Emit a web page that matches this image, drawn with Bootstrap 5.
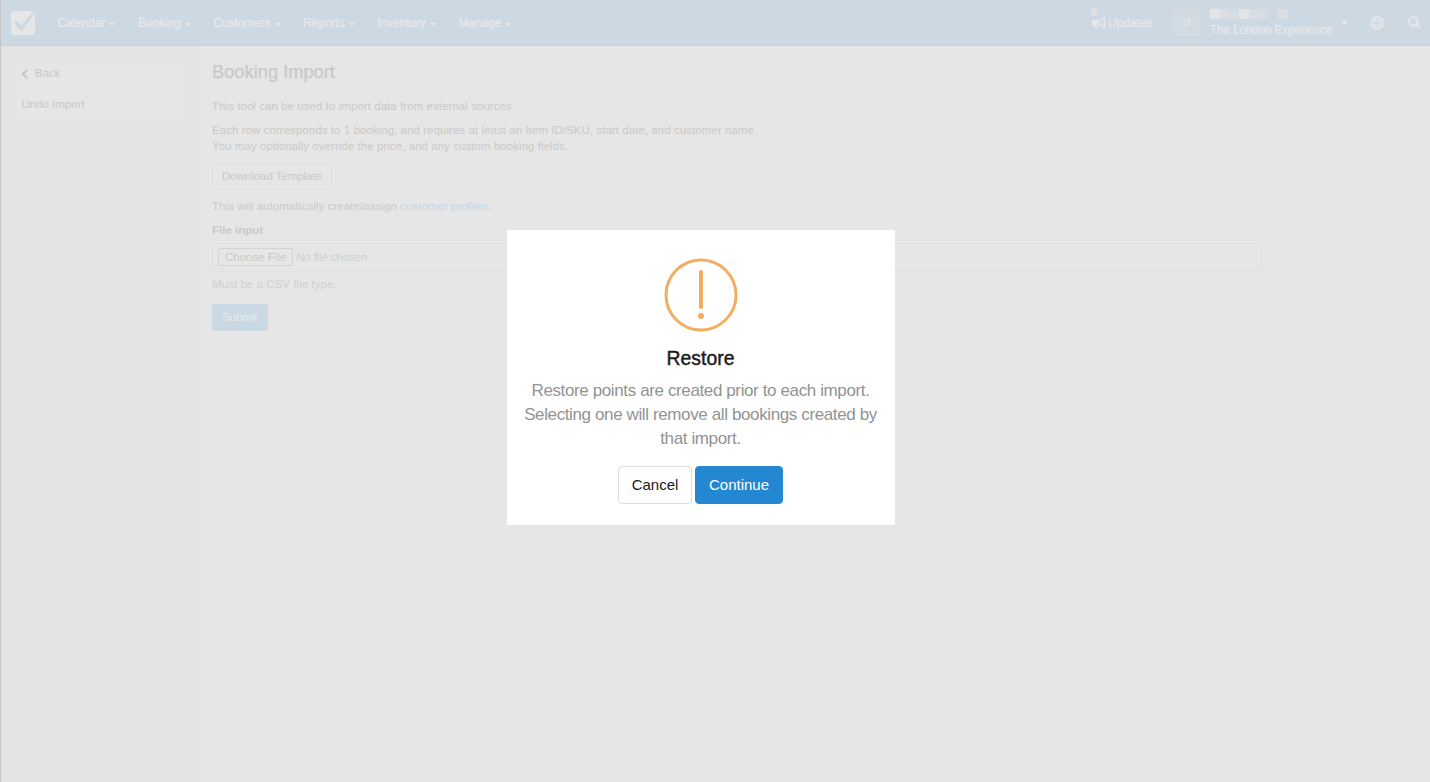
<!DOCTYPE html>
<html lang="en">
<head>
<meta charset="utf-8">
<meta name="viewport" content="width=device-width, initial-scale=1">
<title>Booking Import</title>
<link rel="stylesheet" href="https://cdn.jsdelivr.net/npm/bootstrap@5.3.0/dist/css/bootstrap.min.css">
<style>
body{font-family:"Liberation Sans",Arial,sans-serif;font-size:11.5px;line-height:16.4px;background:#e6e6e6;color:#c9c9c9;height:782px;overflow:hidden;border-left:1px solid #c4c4c6}
.topbar{height:46px;background:#ccd8e2;border-bottom:1px solid #c4d1dd;color:#e6e7e8;margin-left:-1px;border-left:1px solid #85a5c6;padding:0}
.topbar .nav-link{color:#e8e9ea;padding:0;font-size:12px;letter-spacing:-.1px;line-height:16px;white-space:nowrap;-webkit-text-stroke:.2px #e8e9ea}
.topbar .org-name{font-size:11.9px;letter-spacing:-.2px}
.topbar .dropdown-toggle::after{border-top:3px solid;border-left:3.5px solid transparent;border-right:3.5px solid transparent;vertical-align:1px;margin-left:4px}
.main-menu{margin-left:20.5px;gap:22.7px}
.avatar-box{width:27px;height:27px;background:#d3dbe2;border-radius:3px;font-size:13px}
.pixels{height:10px;margin-bottom:3px}
.pixels i{width:9.7px;height:10px}
.side{width:198px;height:736px;background:#e4e4e4;padding:14px 10px 0 11px;border-right:1px solid #e3e3e3}
.side a{display:flex;align-items:center;height:27px;background:#e6e6e6;border-radius:3px;padding-left:9.500px;color:#c8c8c8;text-decoration:none;margin-bottom:4px}
.content-area{padding:16px 0 0 13px;width:1063px}
.content-area h1{font-size:18.3px;line-height:20px;margin:0 0 15.5px;color:#c8c8cb;font-weight:400;-webkit-text-stroke:.25px #c8c8cb}
.content-area p{margin:0 0 8.1px;letter-spacing:.055px}
.content-area a{color:#c3d5e3;text-decoration:none}
.btn-tool{font-size:11.5px;letter-spacing:-.05px;line-height:16px;padding:4px 9px 5px;border:1px solid #dfdfdf;border-radius:3px;color:#c9c9c9}
.file-box{height:29px;border:1px solid #e0e0e0;border-radius:4px;padding:0 5px;color:#d0d0d0}
.file-btn{border:1px solid #d2d2d2;border-radius:2px;line-height:16px;padding:0 6px;margin-right:2.5px;color:#c6c6c6}
.btn-tool.btn-send{background:#c9d8e3;border-color:#c9d8e3;color:#e8e9ea}
.alert-dialog{position:absolute;left:507px;top:230px;width:388px;height:295px;background:#fff;padding:28px 1px 0 0;color:#1d1d1d}
.alert-dialog h2{font-size:19.4px;line-height:24px;margin:14px 0 9px;font-weight:400;-webkit-text-stroke:.45px #1d1d1d}
.alert-dialog p{font-size:17px;letter-spacing:-.38px;line-height:24px;margin:0 0 15px;color:#939393}
.btn-ask{height:38px;font-size:15px;border-radius:4px;padding:0;width:74px;border:1px solid #dcdcdc;color:#1a1a1a}
.btn-go{width:88px;background:#2388d1;border-color:#2388d1;color:#fff}
</style>
</head>
<body>
<nav class="topbar navbar navbar-expand flex-nowrap align-items-center">
  <svg class="flex-shrink-0" style="margin-left:10px" width="26" height="26" viewBox="0 0 26 26"><rect y="1" width="24" height="24" rx="3" fill="#e6e6e6"/><path d="M2.500 13.500L6 11.500L10.500 15.500L20.500 3.500L25 1.500L10.500 21.500Z" fill="#ccd8e2"/></svg>
  <div class="main-menu d-flex">
    <a class="nav-link dropdown-toggle" href="#">Calendar</a>
    <a class="nav-link dropdown-toggle" href="#">Booking</a>
    <a class="nav-link dropdown-toggle" href="#">Customers</a>
    <a class="nav-link dropdown-toggle" href="#">Reports</a>
    <a class="nav-link dropdown-toggle" href="#">Inventory</a>
    <a class="nav-link dropdown-toggle" href="#">Manage</a>
  </div>
  <div class="d-flex align-items-center ms-auto flex-shrink-0">
    <a class="nav-link position-relative d-flex align-items-center" href="#">
      <svg width="14" height="13" viewBox="0 0 14 13" style="margin-right:2.500px"><path d="M0 4h7v5H4.800L6 12H3.500L2 9H0Z" fill="#e6e7e8"/><path d="M6.500 4.300Q10 4 12.500 1.500V11.500Q10 9 6.500 8.700" fill="none" stroke="#e6e7e8" stroke-width="1.500"/></svg>
      <svg class="position-absolute" style="left:-2px;top:-7px" width="8" height="8"><circle cx="4" cy="4" r="4" fill="#dfe0e2"/></svg>
      <span>Updates</span></a>
    <div class="avatar-box d-flex align-items-center justify-content-center" style="margin-left:21px">d</div>
    <div style="margin-left:10px;width:123px">
      <div class="pixels d-flex"><i style="background:#e2e4e6"></i><i style="background:#dadfe4"></i><i style="background:#d4dce3"></i><i style="background:#e3e5e7"></i><i style="background:#d8dee4"></i><i style="background:#d5dce3"></i><i></i><i style="background:#dadfe3"></i></div>
      <div class="nav-link org-name" style="margin-bottom:-2px">The London Experience</div>
    </div>
    <svg style="margin-left:8px" width="7" height="4"><path d="M0 0h7L3.500 4Z" fill="#e6e7e8"/></svg>
    <svg style="margin-left:22px" width="14" height="14" viewBox="0 0 14 14" fill="none" stroke="#e6e7e8"><circle cx="7" cy="7" r="6.200" stroke-width="1.500"/><circle cx="7" cy="7" r="2.800" stroke-width="1.400"/><path d="M5 1.500v3M9 1.500v3M5 9.500v3M9 9.500v3M1.500 5h3M1.500 9h3M9.500 5h3M9.500 9h3" stroke-width="1"/></svg>
    <svg style="margin:0 9px 0 24px" width="13" height="13" viewBox="0 0 13 13" fill="none" stroke="#e6e7e8" stroke-width="2"><circle cx="5.300" cy="5.300" r="4.200"/><path d="M8.200 8.200L12 12"/></svg>
  </div>
</nav>
<div class="d-flex">
  <aside class="side flex-shrink-0">
    <a href="#"><svg style="margin:0 7px 0 .5px" width="6" height="10" viewBox="0 0 6 10"><path d="M5 1L1 5L5 9" fill="none" stroke="#c0c0c0" stroke-width="1.700"/></svg><span>Back</span></a>
    <a href="#"><span>Undo Import</span></a>
  </aside>
  <main class="content-area">
    <h1>Booking Import</h1>
    <p>This tool can be used to import data from external sources.</p>
    <p>Each row corresponds to 1 booking, and requires at least an Item ID/SKU, start date, and customer name.<br>You may optionally override the price, and any custom booking fields.</p>
    <button class="btn btn-tool d-block" style="margin-bottom:8px">Download Template</button>
    <p>This will automatically create/assign <a href="#">customer profiles</a>.</p>
    <label class="fw-bold d-block" style="margin-bottom:4px">File input</label>
    <div class="file-box d-flex align-items-center"><span class="file-btn">Choose File</span><span style="letter-spacing:-.1px">No file chosen</span></div>
    <p style="margin:4px 0 12px;color:#d0d0d0">Must be a CSV file type.</p>
    <button class="btn btn-tool btn-send d-block">Submit</button>
  </main>
</div>
<section class="alert-dialog text-center" role="dialog" aria-modal="true">
  <svg class="d-block mx-auto" width="74" height="74" viewBox="0 0 74 74"><circle cx="37" cy="37" r="35" fill="none" stroke="#f3ad61" stroke-width="3"/><rect x="35" y="12" width="4" height="39" rx="2" fill="#f3ad61"/><circle cx="37" cy="58" r="3" fill="#f3ad61"/></svg>
  <h2>Restore</h2>
  <p>Restore points are created prior to each import.<br>Selecting one will remove all bookings created by<br>that import.</p>
  <div class="d-flex justify-content-center" style="gap:3px"><button class="btn btn-ask">Cancel</button><button class="btn btn-ask btn-go">Continue</button></div>
</section>
<script src="https://cdn.jsdelivr.net/npm/bootstrap@5.3.0/dist/js/bootstrap.bundle.min.js"></script>
</body>
</html>
